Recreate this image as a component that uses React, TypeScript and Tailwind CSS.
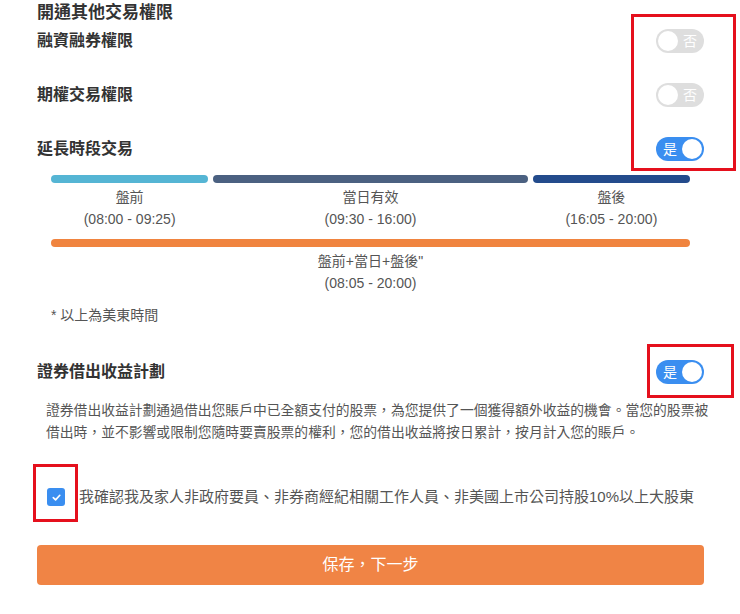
import React from "react";

const sessions = [
  { name: "盤前", time: "(08:00 - 09:25)", color: "bg-[#55b5d4]" },
  { name: "當日有效", time: "(09:30 - 16:00)", color: "bg-[#4b6181]" },
  { name: "盤後", time: "(16:05 - 20:00)", color: "bg-[#234b8c]" },
];

function Toggle({ on }: { on: boolean }) {
  return (
    <div
      className={`flex h-[24px] w-[48px] items-center rounded-full p-[2px] ${
        on ? "flex-row bg-[#3a8ef0]" : "flex-row-reverse bg-[#dedede]"
      }`}
    >
      <span className="flex-1 text-center text-[14px] leading-none text-white">{on ? "是" : "否"}</span>
      <span className="h-[20px] w-[20px] rounded-full bg-white" />
    </div>
  );
}

function PermissionRow({ label, on, className = "" }: { label: string; on: boolean; className?: string }) {
  return (
    <div className={`flex h-[30px] items-center justify-between ${className}`}>
      <span className="text-[16px] font-bold text-[#333]">{label}</span>
      <Toggle on={on} />
    </div>
  );
}

export default function App() {
  return (
    <div className="relative h-[614px] w-[740px] overflow-hidden bg-white font-['Liberation_Sans','Noto_Sans_CJK_TC',sans-serif] text-[#555]">
      <div className="pl-[37px] pr-[36px]">
        <h2 className="text-[17px] font-bold leading-[26px] text-[#333]">開通其他交易權限</h2>
        <PermissionRow label="融資融券權限" on={false} />
        <PermissionRow label="期權交易權限" on={false} className="mt-[24px]" />
        <PermissionRow label="延長時段交易" on={true} className="mt-[24px]" />

        {/* trading sessions */}
        <div className="mt-[11px] px-[14px]">
          <div className="grid grid-cols-[1fr_2fr_1fr] gap-x-[5px]">
            {sessions.map((s) => (
              <div key={s.name} className="flex flex-col items-center">
                <div className={`h-[8px] w-full rounded-full ${s.color}`} />
                <div className="mt-[3px] text-[14px] leading-[22px]">{s.name}</div>
                <div className="text-[14px] leading-[22px]">{s.time}</div>
              </div>
            ))}
          </div>
          <div className="mt-[9px] h-[8px] w-full rounded-full bg-[#f0843f]" />
          <div className="mt-[3px] text-center text-[14px] leading-[22px]">盤前+當日+盤後"</div>
          <div className="text-center text-[14px] leading-[22px]">(08:05 - 20:00)</div>
          <div className="mt-[10px] text-[14px] leading-[22px]">* 以上為美東時間</div>
        </div>

        <PermissionRow label="證券借出收益計劃" on={true} className="mt-[31px]" />

        <p className="mt-[13px] whitespace-nowrap pl-[9px] text-[13.8px] leading-[22px]">
          證券借出收益計劃通過借出您賬戶中已全額支付的股票，為您提供了一個獲得額外收益的機會。當您的股票被
          <br />
          借出時，並不影響或限制您隨時要賣股票的權利，您的借出收益將按日累計，按月計入您的賬戶。
        </p>

        <label className="mt-[42px] flex h-[22px] items-center gap-[14px] pl-[10px]">
          <span className="flex h-[18px] w-[18px] items-center justify-center rounded-[3px] bg-[#3a8ef0]">
            <svg viewBox="0 0 12 12" className="h-[11px] w-[11px]" fill="none" stroke="white" strokeWidth="1.8" strokeLinecap="round" strokeLinejoin="round">
              <path d="M2.5 6.2 5 8.6 9.6 3.6" />
            </svg>
          </span>
          <span className="whitespace-nowrap text-[15px] leading-[22px]">
            我確認我及家人非政府要員、非券商經紀相關工作人員、非美國上市公司持股10%以上大股東
          </span>
        </label>

        <button className="mt-[37px] flex h-[40px] w-full items-center justify-center rounded-[4px] bg-[#f08445] text-[16px] text-white">
          保存，下一步
        </button>
      </div>

      {/* annotation frames */}
      <div className="absolute left-[631px] top-[14px] h-[157px] w-[105px] border-[3px] border-[#e5101d]" />
      <div className="absolute left-[647px] top-[344px] h-[54px] w-[87px] border-[3px] border-[#e5101d]" />
      <div className="absolute left-[33px] top-[464px] h-[58px] w-[45px] border-[3px] border-[#e5101d]" />
    </div>
  );
}
